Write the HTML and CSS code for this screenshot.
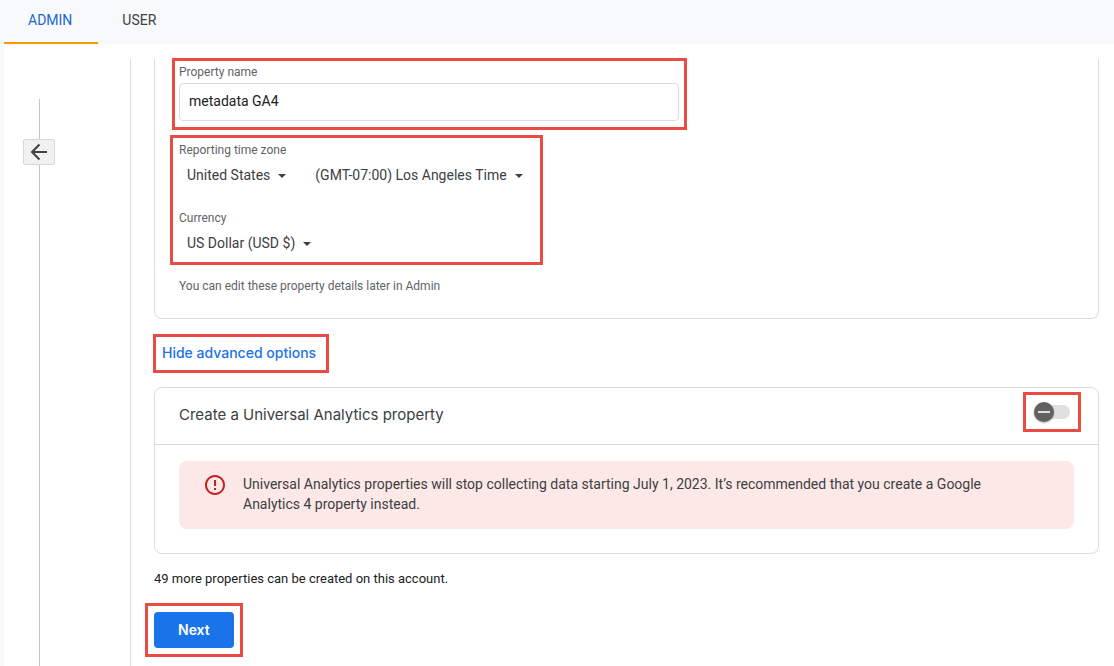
FILE: index.html
```html
<!DOCTYPE html>
<html lang="en">
<head>
  <meta charset="UTF-8">
  <meta name="viewport" content="width=device-width, initial-scale=1.0">
  <title>Admin - Create property</title>
  <link rel="stylesheet" href="styles.css">
</head>
<body>
  <nav class="tabs">
    <a class="tab active" href="#admin">ADMIN</a>
    <a class="tab" href="#user">USER</a>
  </nav>
  <div class="page">
    <div class="rail">
      <button class="back" type="button" aria-label="Back">
        <svg width="18" height="18" viewBox="0 0 18 18" fill="none" stroke="#3c4043" stroke-width="2"><path d="M17 9H2M9.500 1.500L2 9l7.500 7.500"/></svg>
      </button>
    </div>
    <main class="content">
      <section class="card details">
        <div class="field callout">
          <label class="label" for="propertyName">Property name</label>
          <input class="text-input" type="text" id="propertyName" value="metadata GA4">
        </div>
        <div class="locale callout">
          <label class="label" for="country">Reporting time zone</label>
          <div class="selects">
            <span class="dropdown"><select id="country"><option>United States</option></select></span>
            <span class="dropdown"><select id="timezone" aria-label="Time zone"><option>(GMT-07:00) Los Angeles Time</option></select></span>
          </div>
          <label class="label" for="currency">Currency</label>
          <div class="selects">
            <span class="dropdown"><select id="currency"><option>US Dollar (USD $)</option></select></span>
          </div>
        </div>
        <p class="hint">You can edit these property details later in Admin</p>
      </section>

      <button class="advanced callout" type="button">Hide advanced options</button>

      <section class="card">
        <div class="card-header">
          <h2><label for="createUa">Create a Universal Analytics property</label></h2>
          <span class="switch callout">
            <input type="checkbox" role="switch" id="createUa">
          </span>
        </div>
        <div class="alert">
          <svg class="alert-icon" width="24" height="24" viewBox="0 0 24 24" fill="#c5221f"><path d="M11 15h2v2h-2zm0-8h2v6h-2zm.990-5C6.470 2 2 6.480 2 12s4.470 10 9.990 10C17.520 22 22 17.520 22 12S17.520 2 11.990 2zM12 20c-4.420 0-8-3.580-8-8s3.580-8 8-8 8 3.580 8 8-3.580 8-8 8z"/></svg>
          <p>Universal Analytics properties will stop collecting data starting July 1, 2023. It’s recommended that you create a Google Analytics 4 property instead.</p>
        </div>
      </section>

      <p class="quota">49 more properties can be created on this account.</p>
      <div class="actions callout">
        <button class="next" type="button">Next</button>
      </div>
    </main>
  </div>
</body>
</html>
```
FILE: styles.css
```css
* { box-sizing: border-box; }
body { margin: 0; min-height: 100vh; display: flex; flex-direction: column; background: #f8f9fb; color: #3c4043; font-family: Roboto, Arial, sans-serif; font-size: 14px; line-height: 20px; }
h2, p { margin: 0; }
button, input, select { font: inherit; color: inherit; }

.tabs { display: flex; height: 44px; padding-left: 4px; }
.tab { padding: 10px 26px 12px 24px; border-bottom: 2px solid transparent; color: #3c4043; text-decoration: none; }
.tab.active { color: #1967d2; border-bottom-color: #ff9800; }

.page { flex: 1; display: flex; margin-left: 4px; padding-top: 15px; background: #fff; }
.rail { flex: none; display: flex; flex-direction: column; align-items: center; width: 71px; margin: 40px 55px 0 0; }
.rail::before { content: ""; width: 1px; height: 40px; background: #c4c4c4; }
.rail::after { content: ""; width: 1px; flex: 1; background: #c4c4c4; }
.back { display: flex; align-items: center; justify-content: center; width: 32px; height: 26px; margin-right: 1px; padding: 0; background: #f1f1f1; border: 1px solid #d8d8d8; border-radius: 2px; }

.content { flex: 1; padding: 0 15px 9px 23px; border-left: 1px solid #dadce0; }
.callout { outline: 3px solid #ea4b45; outline-offset: 4px; }

.card { border: 1px solid #dadce0; border-radius: 8px; padding: 0 24px 24px; }
.details { border-top: 0; border-radius: 0 0 8px 8px; padding-top: 6px; padding-bottom: 22px; }
.label { display: block; color: #5f6368; font-size: 12px; line-height: 14px; }
.field { max-width: 501px; padding: 0 1px 2px 0; }
.text-input { display: block; width: 100%; height: 38px; margin-top: 4px; padding: 0 9px 2px; color: #202124; background: #fff; border: 1px solid #dadce0; border-radius: 4px; }
.locale { width: 359px; margin: 19px 0 0 -2px; padding: 1px 2px 5px; }
.selects { display: flex; gap: 29px; padding: 8px 8px 0; }
.selects + .label { margin-top: 26px; }
.dropdown { display: flex; align-items: center; gap: 8px; }
.dropdown select { appearance: none; field-sizing: content; padding: 0; border: 0; background: none; }
.dropdown::after { content: ""; margin-top: 2px; border: 4px solid transparent; border-top-color: #3c4043; border-bottom: 0; }
.hint { margin-top: 18px; color: #5f6368; font-size: 12px; }

.advanced { display: block; height: 25px; margin: 22px 0 21px 6px; padding: 0 6px 2px 2px; color: #1a73e8; background: none; border: 0; font-family: Inter, sans-serif; font-weight: 500; }

.card-header { display: flex; justify-content: space-between; height: 57px; margin: 0 -24px 16px; padding: 11px 24px 0; border-bottom: 1px solid #dadce0; }
.card-header h2 { padding-top: 6px; font-family: Inter, sans-serif; font-size: 15px; font-weight: 400; color: #3c4043; }
.switch { display: flex; align-items: center; width: 44px; height: 26px; padding-left: 4px; }
.switch input { appearance: none; display: flex; align-items: center; width: 36px; height: 14px; margin: 0; border-radius: 7px; background: #e0e0e0; }
.switch input::before { content: ""; width: 20px; height: 20px; border-radius: 50%; background: linear-gradient(#e0e0e0, #e0e0e0) center / 12px 2px no-repeat #616161; box-shadow: 0 1px 2px rgba(0, 0, 0, 0.3); }

.alert { display: flex; gap: 16px; padding: 12px 64px 15px 24px; background: #fce8e6; border-radius: 8px; }
.alert p { padding-top: 1px; }
.alert-icon { flex: none; }

.quota { margin: 15px 0 21px; color: #202124; font-size: 13px; }
.actions { width: fit-content; margin-left: -2px; padding: 2px; }
.next { display: block; height: 36px; padding: 0 24px; color: #fff; background: #1a73e8; border: 0; border-radius: 4px; font-family: Inter, sans-serif; font-weight: 600; }
```
